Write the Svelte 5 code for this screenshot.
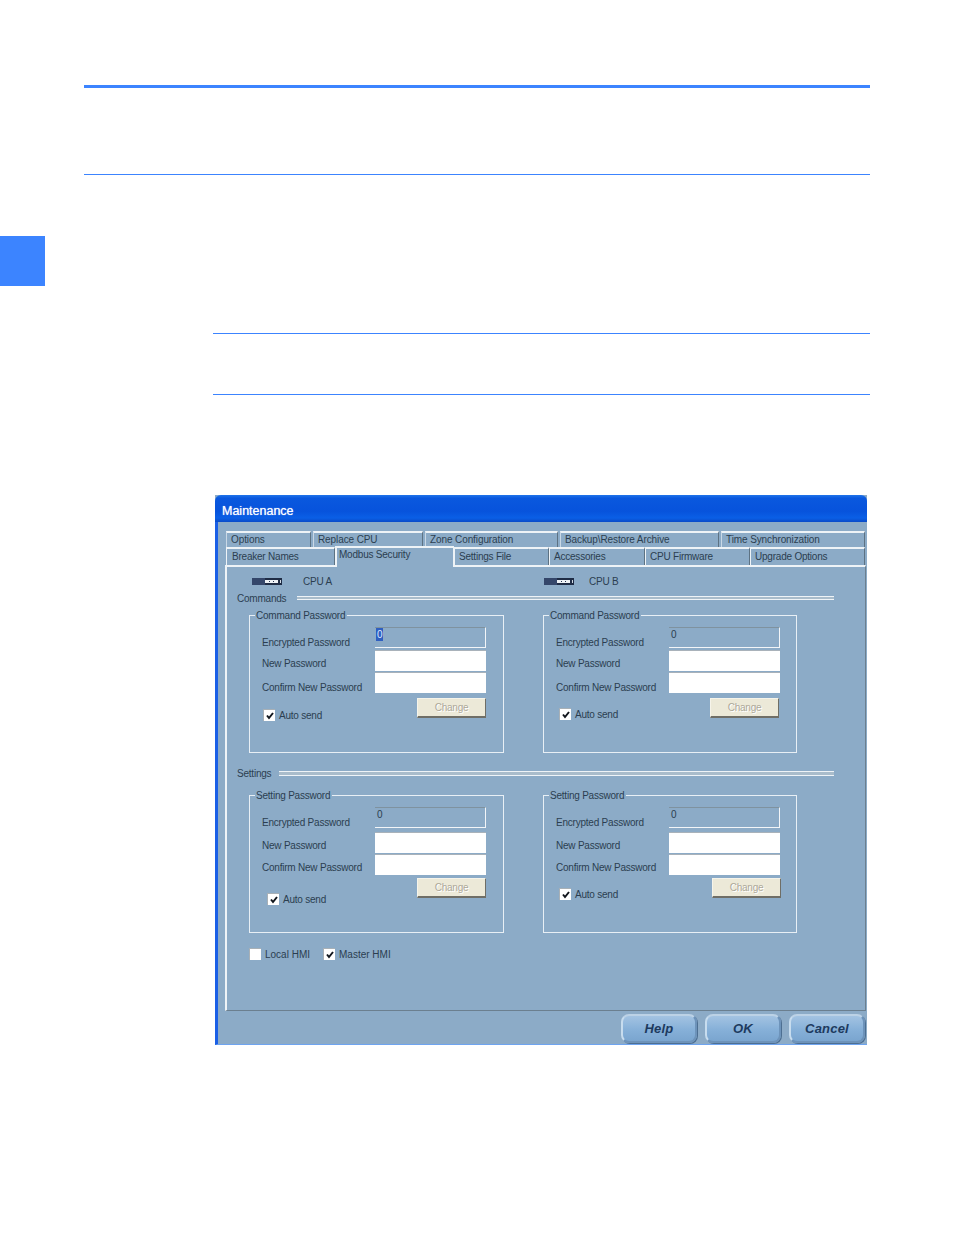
<script lang="ts">
  const TOP_TABS = [
    { label: 'Options', width: 85 },
    { label: 'Replace CPU', width: 110 },
    { label: 'Zone Configuration', width: 133 },
    { label: 'Backup\\Restore Archive', width: 159 },
    { label: 'Time Synchronization', width: 144 }
  ];

  const BOTTOM_TABS = [
    { label: 'Breaker Names', width: 109 },
    { label: 'Modbus Security', width: 119, active: true },
    { label: 'Settings File', width: 95 },
    { label: 'Accessories', width: 96 },
    { label: 'CPU Firmware', width: 105 },
    { label: 'Upgrade Options', width: 115 }
  ];

  const COMMANDS = [
    { legend: 'Command Password', selected: true, sendX: 1, sendY: 10, changeX: 0 },
    { legend: 'Command Password', selected: false, sendX: 3, sendY: 9, changeX: 1 }
  ];

  const SETTINGS = [
    { legend: 'Setting Password', selected: false, sendX: 5, sendY: 14, changeX: 0 },
    { legend: 'Setting Password', selected: false, sendX: 3, sendY: 9, changeX: -1 }
  ];
</script>

{#snippet rack()}
  <svg class="rack" width="30" height="7" viewBox="0 0 30 7" aria-hidden="true">
    <rect width="30" height="7" fill="#1f2c45" />
    <rect x="0" y="0" width="13" height="7" fill="#34466a" />
    <rect x="13" y="2" width="13" height="3" fill="#eef2f6" />
    <rect x="17" y="3" width="1" height="1" fill="#26344f" />
    <rect x="21" y="3" width="1" height="1" fill="#26344f" />
    <rect x="28" y="2" width="1" height="3" fill="#cfd8e2" />
  </svg>
{/snippet}

{#snippet checkbox(label: string, checked: boolean)}
  <span class="check">
    <span class="box">
      {#if checked}
        <svg width="10" height="10" viewBox="0 0 10 10" aria-hidden="true">
          <path d="M2 4.5 L4 7 L8 2" fill="none" stroke="#10151c" stroke-width="2" />
        </svg>
      {/if}
    </span>
    <span class="check-text">{label}</span>
  </span>
{/snippet}

{#snippet group(g: (typeof COMMANDS)[number], rowsClass: string, gap: number)}
  <div class="group">
    <span class="legend">{g.legend}</span>
    <div class="form {rowsClass}">
      <span class="lbl">Encrypted Password</span>
      <span class="field readonly"><span class:sel={g.selected}>0</span></span>
      <span class="lbl">New Password</span>
      <span class="field"></span>
      <span class="lbl">Confirm New Password</span>
      <span class="field"></span>
    </div>
    <div class="send-row" style="margin-top: {gap}px">
      <span style="margin: {g.sendY}px 0 0 {g.sendX}px">{@render checkbox('Auto send', true)}</span>
      <button class="change" style="margin-right: {g.changeX}px" disabled>Change</button>
    </div>
  </div>
{/snippet}

<div class="page">
  <div class="rule heavy"></div>
  <div class="rule second"></div>
  <div class="side-tab"></div>
  <div class="indented">
    <div class="rule third"></div>
    <div class="rule fourth"></div>
  </div>

  <div class="dialog">
    <div class="titlebar">Maintenance</div>
    <div class="body">
      <div class="tabs top">
        {#each TOP_TABS as t}
          <span class="tab" style="width: {t.width}px">{t.label}</span>
        {/each}
      </div>
      <div class="tabs bottom">
        {#each BOTTOM_TABS as t}
          <span class="tab" class:active={t.active} style="width: {t.width}px">{t.label}</span>
        {/each}
      </div>

      <div class="panel">
        <div class="cpus">
          <div class="cpu">{@render rack()}<span>CPU A</span></div>
          <div class="cpu">{@render rack()}<span>CPU B</span></div>
        </div>

        <div class="section commands">
          <span>Commands</span>
          <span class="line"></span>
        </div>
        <div class="groups">
          {#each COMMANDS as g}
            {@render group(g, 'cmd', 5)}
          {/each}
        </div>

        <div class="section settings">
          <span>Settings</span>
          <span class="line"></span>
        </div>
        <div class="groups">
          {#each SETTINGS as g}
            {@render group(g, 'set', 3)}
          {/each}
        </div>

        <div class="hmi">
          {@render checkbox('Local HMI', false)}
          {@render checkbox('Master HMI', true)}
        </div>
      </div>

      <div class="footer">
        <button class="action">Help</button>
        <button class="action">OK</button>
        <button class="action">Cancel</button>
      </div>
    </div>
  </div>
</div>

<style>
  :global(body) {
    margin: 0;
    background: #fff;
  }

  .page {
    width: 954px;
    height: 1235px;
    padding-top: 85px;
    box-sizing: border-box;
    font-family: "Liberation Sans", Arial, sans-serif;
    font-size: 10px;
    letter-spacing: -0.22px;
    color: #2b3e50;
  }

  .rule {
    background: #3c84ff;
    height: 1px;
    margin: 0 84px;
  }

  .rule.heavy {
    height: 3px;
  }

  .rule.second {
    margin-top: 86px;
  }

  .side-tab {
    width: 45px;
    height: 50px;
    margin-top: 61px;
    background: #3c84ff;
  }

  .indented {
    margin: 47px 84px 0 213px;
  }

  .indented .rule {
    margin: 0;
  }

  .rule.fourth {
    margin-top: 60px;
  }

  .dialog {
    width: 652px;
    height: 550px;
    margin: 100px 0 0 215px;
    display: flex;
    flex-direction: column;
    background: #8cabc7;
  }

  .titlebar {
    height: 27px;
    flex: none;
    box-sizing: border-box;
    padding: 9px 0 0 7px;
    border-radius: 6px 6px 0 0;
    background: linear-gradient(180deg, #1f74ea 0%, #0a58de 12%, #0753dc 60%, #0a5fe6 85%, #0a4bc8 100%);
    color: #fff;
    font-size: 12.5px;
    letter-spacing: 0;
    line-height: 14px;
    text-shadow: 0 0 1px #cfe0ff;
  }

  .body {
    flex: 1;
    display: flex;
    flex-direction: column;
    border-left: 3px solid #1a5fe6;
    border-bottom: 1px solid #6ea4f0;
    padding: 9px 0 0 0;
    min-height: 0;
  }

  .tabs {
    display: flex;
    margin-left: 8px;
  }

  .tabs.top {
    gap: 2px;
    height: 16px;
    letter-spacing: -0.1px;
  }

  .tabs.bottom {
    height: 18px;
  }

  .tab {
    box-sizing: border-box;
    flex: none;
    height: 100%;
    padding: 1px 0 0 4px;
    line-height: 12px;
    border-top: 2px solid #eef3f7;
    border-left: 1px solid #c9d8e6;
    border-right: 1px solid #5d7283;
    white-space: nowrap;
  }

  .tabs.bottom .tab {
    padding-top: 2px;
    border-left-color: #eef3f7;
  }

  .tabs.bottom .tab:first-child {
    padding-left: 5px;
  }

  .tabs.bottom .tab.active {
    position: relative;
    z-index: 1;
    height: 21px;
    margin-top: -1px;
    padding: 1px 0 0 2px;
    border-left: 2px solid #eef3f7;
    border-right: 1px solid #eef3f7;
    background: #8cabc7;
  }

  .panel {
    box-sizing: border-box;
    width: 641px;
    height: 446px;
    margin-left: 7px;
    padding-top: 7px;
    border-top: 2px solid #eef3f7;
    border-left: 2px solid #eef3f7;
    border-right: 1px solid #6b7f8f;
    border-bottom: 1px solid #6b7f8f;
    flex: none;
  }

  .cpus {
    display: grid;
    grid-template-columns: 292px auto;
    height: 14px;
    padding-left: 25px;
  }

  .cpu {
    display: flex;
    align-items: center;
    gap: 21px;
  }

  .cpu span {
    padding-top: 2px;
    line-height: 12px;
  }

  .cpu:last-child {
    gap: 15px;
  }

  .rack {
    flex: none;
  }

  .section {
    display: flex;
    align-items: center;
    height: 14px;
    padding-left: 10px;
    width: 597px;
  }

  .section span:first-child {
    padding-top: 2px;
    line-height: 12px;
  }

  .section.commands {
    margin-top: 3px;
    gap: 11px;
  }

  .section.settings {
    margin-top: 13px;
    gap: 8px;
  }

  .line {
    flex: 1;
    height: 2px;
    border-top: 1px solid #eef3f7;
    border-bottom: 1px solid #eef3f7;
    background: #a9bccb;
  }

  .section.settings .line {
    height: 3px;
  }

  .groups {
    display: grid;
    grid-template-columns: 255px 254px;
    column-gap: 39px;
    margin: 10px 0 0 22px;
  }

  .section.settings + .groups {
    margin-top: 15px;
  }

  .group {
    position: relative;
    box-sizing: border-box;
    height: 138px;
    padding: 11px 0 0 12px;
    border: 1px solid #e8eff5;
  }

  .legend {
    position: absolute;
    top: -7px;
    left: 5px;
    padding: 0 2px 0 1px;
    line-height: 14px;
    background: #8cabc7;
  }

  .form {
    display: grid;
    grid-template-columns: 113px 111px;
    width: 224px;
  }

  .form.cmd {
    grid-template-rows: 21px 23px 22px;
  }

  .form.set {
    grid-template-rows: 21px 25px 22px;
  }

  .lbl {
    align-self: end;
    line-height: 14px;
    white-space: nowrap;
    margin-bottom: -2px;
  }

  .form.cmd .lbl:nth-child(3),
  .form.set .lbl:nth-child(3),
  .form.set .lbl:nth-child(5) {
    margin-bottom: 0;
  }

  .field {
    align-self: end;
    box-sizing: border-box;
    height: 21px;
    background: #fff;
    border-top: 1px solid #a9b2ba;
  }

  .field.readonly {
    background: #8cabc7;
    border-top: 1px solid #7f929f;
    border-right: 1px solid #f2f5f8;
    border-bottom: 1px solid #f2f5f8;
    padding-left: 2px;
    line-height: 13px;
  }

  .sel {
    display: inline-block;
    background: #2f5fc0;
    color: #dfe8ff;
    padding: 0 1px;
    margin-left: -1px;
  }

  .send-row {
    display: flex;
    justify-content: space-between;
    align-items: flex-start;
    width: 224px;
  }

  .check {
    display: inline-flex;
    align-items: center;
    gap: 4px;
    height: 14px;
    white-space: nowrap;
  }

  .check-text {
    padding-top: 2px;
    line-height: 12px;
  }

  .box {
    box-sizing: border-box;
    width: 12px;
    height: 12px;
    flex: none;
    display: flex;
    align-items: center;
    justify-content: center;
    background: #fff;
    border-top: 1px solid #a8b0b6;
    border-left: 1px solid #a8b0b6;
  }

  .change {
    box-sizing: border-box;
    width: 69px;
    height: 20px;
    padding: 0;
    background: #ece9d8;
    border: 1px solid #f6f4ea;
    border-right: 1px solid #6f6e66;
    border-bottom: 2px solid #6f6e66;
    color: #aca899;
    text-shadow: 1px 1px 0 #fff;
    font: inherit;
    letter-spacing: inherit;
  }

  .hmi {
    display: flex;
    gap: 13px;
    height: 14px;
    margin: 14px 0 0 22px;
    letter-spacing: 0;
  }

  .footer {
    flex: 1;
    display: flex;
    justify-content: flex-end;
    gap: 8px;
    padding: 3px 2px 0 0;
  }

  .action {
    box-sizing: border-box;
    width: 76px;
    height: 29px;
    padding: 0;
    border: 2px solid #6d93ba;
    border-top-color: #bcd2e6;
    border-left-color: #c7dcee;
    border-radius: 8px;
    background: linear-gradient(180deg, #a3c3e2 0%, #86b0d8 55%, #7aa5cf 100%);
    box-shadow: 1px 1px 0 #4d6f92;
    color: #1d3a5e;
    font: italic bold 13px "Liberation Sans", Arial, sans-serif;
    letter-spacing: 0.2px;
  }
</style>
